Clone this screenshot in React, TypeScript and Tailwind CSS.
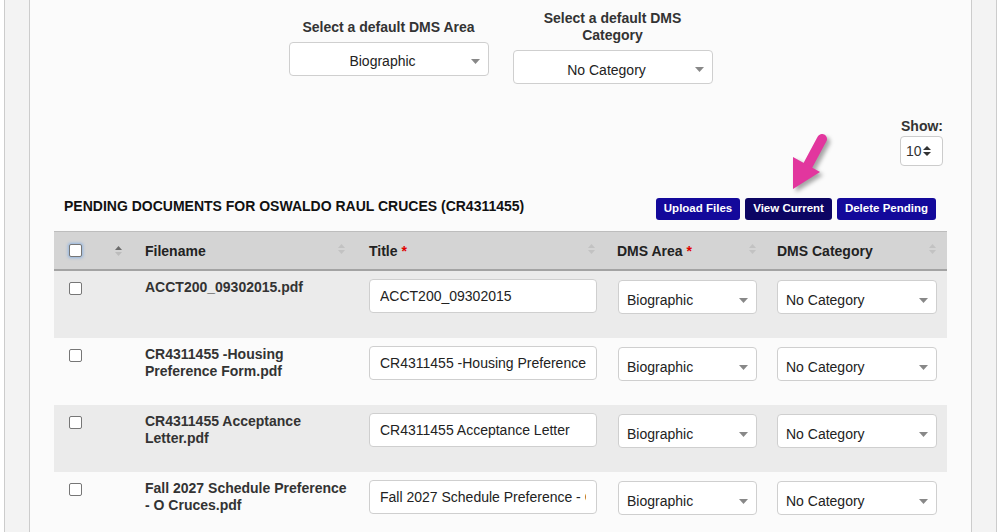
import React from "react";

const font = "font-['Liberation_Sans',Arial,sans-serif]";

function Caret({ className = "" }: { className?: string }) {
  return (
    <svg width="9" height="5" viewBox="0 0 9 5" className={className}>
      <path d="M0 0 L9 0 L4.5 5 Z" fill="#888" />
    </svg>
  );
}

function SortIcon({ active = false }: { active?: boolean }) {
  return (
    <svg width="7" height="10" viewBox="0 0 7 10">
      <path d="M0 4 L7 4 L3.5 0 Z" fill={active ? "#6b6b6b" : "#c2c2c2"} />
      <path d="M0 6 L7 6 L3.5 10 Z" fill={active ? "#bcbcbc" : "#c2c2c2"} />
    </svg>
  );
}

function Check({ glow = false }: { glow?: boolean }) {
  return (
    <div
      className={`w-[13px] h-[13px] rounded-[2px] border border-[#767676] bg-white ${
        glow ? "shadow-[0_0_3px_1px_rgba(102,160,233,0.6)]" : ""
      }`}
    />
  );
}

function RowSelect({ value, width }: { value: string; width: string }) {
  return (
    <div
      className={`${width} h-[34px] rounded-[4px] border border-[#cfcfcf] bg-white flex items-center justify-between pl-[8px] pr-[8px] pt-[6px] text-[14px] text-[#222]`}
    >
      <span>{value}</span>
      <Caret />
    </div>
  );
}

const rows = [
  { file: ["ACCT200_09302015.pdf"], title: "ACCT200_09302015" },
  { file: ["CR4311455 -Housing", "Preference Form.pdf"], title: "CR4311455 -Housing Preference Form" },
  { file: ["CR4311455 Acceptance", "Letter.pdf"], title: "CR4311455 Acceptance Letter" },
  { file: ["Fall 2027 Schedule Preference", "- O Cruces.pdf"], title: "Fall 2027 Schedule Preference - O Cruces" },
];

const cols = "grid grid-cols-[49px_32px_224px_248px_160px_180px]";

export default function App() {
  return (
    <div className={`${font} min-h-screen bg-white`}>
      <div className="ml-[4px] w-[993px] h-[532px] overflow-hidden border-x border-[#cccccc] bg-[#f3f3f3] px-[24px]">
        <div className="relative h-full border-x border-[#cccccc] bg-[#fbfbfb] px-[24px]">
          {/* default selects */}
          <div className="flex justify-center items-center gap-[24px] pt-[10px]">
            <div className="w-[200px]">
              <div className="text-center text-[14px] leading-[17px] font-bold text-[#333]">
                Select a default DMS Area
              </div>
              <div className="relative mt-[6px] h-[34px] rounded-[4px] border border-[#cfcfcf] bg-white flex items-center justify-center pt-[6px] pr-[12px] text-[14px] text-[#222]">
                Biographic
                <Caret className="absolute right-[8px] top-[16px]" />
              </div>
            </div>
            <div className="w-[200px]">
              <div className="text-center text-[14px] leading-[17px] font-bold text-[#333] px-[20px]">
                Select a default DMS Category
              </div>
              <div className="relative mt-[6px] h-[34px] rounded-[4px] border border-[#cfcfcf] bg-white flex items-center justify-center pt-[6px] pr-[12px] text-[14px] text-[#222]">
                No Category
                <Caret className="absolute right-[8px] top-[16px]" />
              </div>
            </div>
          </div>

          {/* show */}
          <div className="flex justify-end pr-[4px] mt-[34px]">
            <div className="flex flex-col items-end">
              <div className="text-[14px] leading-[17px] font-bold text-[#333]">Show:</div>
              <div className="mt-[1px] w-[43px] h-[30px] rounded-[4px] border border-[#cccccc] bg-white flex items-center pl-[5px] text-[14px] text-[#333]">
                10
                <svg width="8" height="10" viewBox="0 0 8 10" className="ml-[1px]">
                  <path d="M0 4 L8 4 L4 0 Z" fill="#333" />
                  <path d="M0 6 L8 6 L4 10 Z" fill="#333" />
                </svg>
              </div>
            </div>
          </div>

          {/* title row */}
          <div className="mt-[32px] flex items-center justify-between pl-[10px] pr-[11px] h-[22px]">
            <div className="text-[14px] font-bold text-[#111] pb-[5px]">
              PENDING DOCUMENTS FOR OSWALDO RAUL CRUCES (CR4311455)
            </div>
            <div className="flex gap-[5px] text-[11.5px] font-bold text-white">
              <div className="h-[22px] px-[8px] flex items-center rounded-[3px] bg-[#13099b]">Upload Files</div>
              <div className="h-[22px] px-[8px] flex items-center rounded-[3px] bg-[#0c0563]">View Current</div>
              <div className="h-[22px] px-[8px] flex items-center rounded-[3px] bg-[#13099b]">Delete Pending</div>
            </div>
          </div>

          {/* table */}
          <div className="mt-[11px] w-[893px]">
            <div className={`${cols} h-[40px] bg-[#d4d4d4] border-t border-[#bdbdbd] border-b-2 border-b-[#a3a3a3] text-[14px] font-bold text-[#222]`}>
              <div className="flex items-center pl-[15px]"><Check glow /></div>
              <div className="flex items-center justify-center pr-[1px]"><SortIcon active /></div>
              <div className="relative flex items-center pl-[10px] pt-[2px]">
                Filename
                <div className="absolute right-[14px] top-[12px]"><SortIcon /></div>
              </div>
              <div className="relative flex items-center pl-[10px] pt-[2px]">
                Title&nbsp;<span className="text-[#e00000]">*</span>
                <div className="absolute right-[12px] top-[12px]"><SortIcon /></div>
              </div>
              <div className="relative flex items-center pl-[10px] pt-[2px]">
                DMS Area&nbsp;<span className="text-[#e00000]">*</span>
                <div className="absolute right-[11px] top-[12px]"><SortIcon /></div>
              </div>
              <div className="relative flex items-center pl-[10px] pt-[2px]">
                DMS Category
                <div className="absolute right-[11px] top-[12px]"><SortIcon /></div>
              </div>
            </div>
            {rows.map((r, i) => (
              <div key={i} className={`${cols} h-[67px] ${i % 2 === 0 ? "bg-[#ebebeb]" : "bg-[#fbfbfb]"}`}>
                <div className="pl-[15px] pt-[11px]"><Check /></div>
                <div />
                <div className="pl-[10px] pt-[8px] text-[14px] leading-[17px] font-bold text-[#333]">
                  {r.file.map((l, j) => (
                    <div key={j}>{l}</div>
                  ))}
                </div>
                <div className="pl-[10px] pr-[10px] pt-[8px]">
                  <input
                    readOnly
                    value={r.title}
                    className="w-[228px] h-[34px] rounded-[4px] border border-[#cfcfcf] bg-white px-[10px] text-[14px] text-[#222] outline-none"
                  />
                </div>
                <div className="pl-[11px] pt-[9px]">
                  <RowSelect value="Biographic" width="w-[139px]" />
                </div>
                <div className="pl-[10px] pt-[9px]">
                  <RowSelect value="No Category" width="w-[160px]" />
                </div>
              </div>
            ))}
          </div>

          {/* annotation arrow */}
          <svg
            width="70"
            height="75"
            viewBox="0 0 70 75"
            className="absolute left-[740px] top-[125px] drop-shadow-[3px_3px_2px_rgba(0,0,0,0.35)]"
          >
            <path d="M52 14 L37 42" stroke="#e2369e" strokeWidth="10" strokeLinecap="round" fill="none" />
            <path d="M23 32 L50 47 L23 64 Z" fill="#e2369e" />
          </svg>
        </div>
      </div>
    </div>
  );
}
